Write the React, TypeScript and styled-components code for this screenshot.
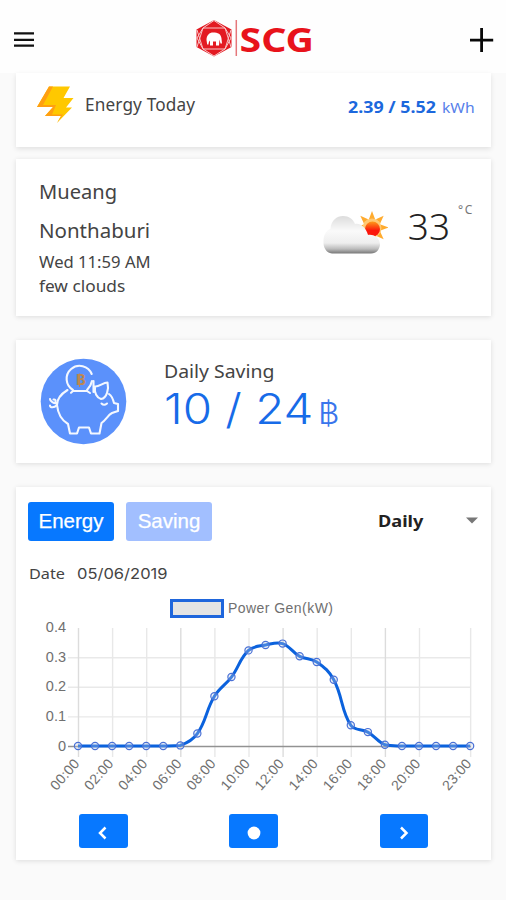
import React from "react";
import styled, { createGlobalStyle } from "styled-components";

const GlobalStyle = createGlobalStyle`
  * { box-sizing: border-box; }
  body { margin: 0; background: #fafafa; font-family: "Noto Sans", sans-serif; color: #333; }
  button { font: inherit; border: 0; padding: 0; cursor: pointer; }
`;

const Page = styled.div`
  height: 900px;
  overflow: hidden;
  background: #fafafa;
`;

const Header = styled.header`
  display: grid;
  grid-template-columns: 48px 1fr 48px;
  height: 73px;
  background: #fefefe;
`;

const IconButton = styled.button`
  display: flex;
  background: none;
`;

const Brand = styled.div`
  display: flex;
  justify-content: center;
  padding-left: 3px;
`;

const Stack = styled.main`
  display: flex;
  flex-direction: column;
  padding: 0 15px 0 16px;
`;

const Card = styled.section<{ $height: number; $gap?: number }>`
  height: ${(p) => p.$height}px;
  margin-top: ${(p) => p.$gap ?? 0}px;
  background: #fff;
  box-shadow: 0 1px 5px rgba(0, 0, 0, 0.12);
`;

const EnergyCard = styled(Card)`
  display: flex;
  align-items: center;
  gap: 11px;
  padding: 0 17px 11px 20px;
  box-shadow: 0 2px 5px rgba(0, 0, 0, 0.1);
`;

const WeatherCard = styled(Card)`
  display: flex;
  padding: 13px 17px 0 23px;
`;

const SavingCard = styled(Card)`
  display: flex;
  padding: 18px 0 0 24px;
`;

const Label = styled.span<{
  $size: number;
  $line?: number;
  $spacing?: number;
  $color?: string;
  $weight?: number;
  $font?: string;
  $stretch?: number;
}>`
  display: block;
  white-space: nowrap;
  font-family: ${(p) => p.$font ?? '"Noto Sans"'}, sans-serif;
  font-size: ${(p) => p.$size}px;
  line-height: ${(p) => (p.$line ? `${p.$line}px` : "normal")};
  letter-spacing: ${(p) => p.$spacing ?? 0}px;
  color: ${(p) => p.$color ?? "#444"};
  font-weight: ${(p) => p.$weight ?? 400};
  transform: scaleX(${(p) => p.$stretch ?? 1});
  transform-origin: left;
`;

const EnergyValue = styled.div`
  display: flex;
  align-items: baseline;
  gap: 13px;
  margin-left: auto;
  padding-top: 3px;
`;

const Place = styled.div`
  flex: 1;
`;

const Temperature = styled.div`
  display: flex;
  align-items: flex-start;
  gap: 8px;
  margin-left: 20px;
`;

const Reading = styled(Label)`
  margin-top: 28px;
`;

const Unit = styled(Label)`
  margin-top: 30px;
`;

const WeatherIcon = styled.svg`
  margin-top: 34px;
`;

const SavingText = styled.div`
  margin-left: 37px;
`;

const Amount = styled.div`
  display: flex;
  align-items: baseline;
  gap: 22px;
`;

const Toolbar = styled.div`
  display: flex;
  align-items: center;
  gap: 12px;
  padding: 15px 13px 0 12px;
`;

const ModeButton = styled.button<{ $active?: boolean }>`
  width: 86px;
  height: 39px;
  padding-bottom: 2px;
  border-radius: 3px;
  background: ${(p) => (p.$active ? "#0778ff" : "#a2bfff")};
  color: #fff;
  font-family: "Liberation Sans", sans-serif;
  font-size: 20.5px;
  -webkit-text-stroke: 0.25px #fff;
`;

const Select = styled.div`
  display: flex;
  align-items: center;
  justify-content: space-between;
  width: 100px;
  margin-left: auto;
  padding-bottom: 2px;
`;

const DateRow = styled.div`
  display: flex;
  gap: 16px;
  height: 55px;
  padding: 21px 0 0 13px;
`;

const Chart = styled.svg`
  display: block;
`;

const Pager = styled.div`
  display: flex;
  justify-content: space-between;
  padding: 0 63px;
  margin-top: 19px;
`;

const PageButton = styled.button`
  display: flex;
  align-items: center;
  justify-content: center;
  width: 48.5px;
  height: 34px;
  padding-top: 3px;
  border-radius: 3px;
  background: #0778ff;
`;

const values = [0, 0, 0, 0, 0, 0, 0.002, 0.042, 0.168, 0.233, 0.323, 0.341, 0.346, 0.303, 0.284, 0.224, 0.07, 0.047, 0.004, 0, 0, 0, 0, 0];
const ticks = [0, 2, 4, 6, 8, 10, 12, 14, 16, 18, 20, 23];
const LEFT = 62;
const STEP = 17.05;
const BASE = 150.5;
const UNIT = 296;

const points = values.map((v, i) => ({ x: LEFT + i * STEP, y: BASE - 0.5 - v * UNIT }));

function smoothPath(pts: { x: number; y: number }[], tension = 0.4) {
  const clamp = (y: number) => Math.min(BASE - 0.5, y);
  const controls = pts.map((p, i) => {
    const prev = pts[Math.max(0, i - 1)];
    const next = pts[Math.min(pts.length - 1, i + 1)];
    const d1 = Math.hypot(p.x - prev.x, p.y - prev.y);
    const d2 = Math.hypot(next.x - p.x, next.y - p.y);
    const a = (tension * d1) / (d1 + d2);
    const b = (tension * d2) / (d1 + d2);
    const dx = next.x - prev.x;
    const dy = next.y - prev.y;
    return { inX: p.x - a * dx, inY: clamp(p.y - a * dy), outX: p.x + b * dx, outY: clamp(p.y + b * dy) };
  });
  return pts.reduce((d, p, i) => {
    if (i === 0) return `M${p.x} ${p.y}`;
    const c0 = controls[i - 1];
    const c1 = controls[i];
    return `${d}C${c0.outX} ${c0.outY} ${c1.inX} ${c1.inY} ${p.x} ${p.y}`;
  }, "");
}

function PowerChart() {
  return (
    <Chart width="475" height="199" viewBox="0 0 475 199" fontFamily="Liberation Sans, sans-serif" fill="#707070">
      <rect x="155.5" y="4.5" width="51" height="16" fill="#e4e4e4" stroke="#1f66dc" strokeWidth="3" />
      <text x="212" y="16.5" fontSize="14" textLength="105">Power Gen(kW)</text>
      {[0.4, 0.3, 0.2, 0.1, 0].map((v) => (
        <text key={v} x="50" y={BASE + 4 - v * UNIT} textAnchor="end" fontSize="14.5">{v}</text>
      ))}
      {[0.1, 0.2, 0.3].map((v) => (
        <path key={v} d={`M52 ${BASE - v * UNIT}H455`} stroke="#e9e9e9" strokeWidth="1.4" />
      ))}
      {ticks.map((t) => (
        <path key={t} d={`M${LEFT + 0.5 + t * STEP} 32V161`} stroke={t % 6 ? "#e8e8e8" : "#dcdcdc"} strokeWidth="1.4" />
      ))}
      <path d={`M52 ${BASE}H455`} stroke="#929292" strokeWidth="1.3" />
      {ticks.map((t) => (
        <text key={t} transform={`translate(${LEFT + 2 + t * STEP} 168) rotate(-49)`} textAnchor="end" fontSize="14" textLength="36">
          {`${String(t).padStart(2, "0")}:00`}
        </text>
      ))}
      <path d={smoothPath(points)} fill="none" stroke="#0b62dd" strokeWidth="3" />
      {points.map((p, i) => (
        <circle key={i} cx={p.x} cy={p.y} r="3.6" fill="rgba(200,210,230,.3)" stroke="#4a71d6" strokeWidth="1.2" />
      ))}
    </Chart>
  );
}

function ScgLogo() {
  return (
    <svg width="122" height="73" viewBox="193 0 122 73">
      <path d="M213 20L230.500 29.500V47L213 56.500L195.500 47V29.500Z" fill="#e31a22" />
      <g fill="none" stroke="#fff" strokeWidth="1" opacity=".75">
        <path d="M213 20.500L202 28L196 38L202 49L213 56L224 49L230 38L224 28Z" />
        <path d="M196 30L202 49H224L230 30M196 47L202 28H224L230 47" />
      </g>
      <circle cx="213" cy="38.500" r="9" fill="#e31a22" />
      <path d="M205.500 40c0-5 3-7.500 6.500-7.500c5 0 8 1.500 8.500 6l.5 5h-1.500l-1-4-.5 6h-3v-4h-3v4h-3v-5c-1 1-1.500 2-1.500 4h-1.300z" fill="#fff" />
      <path d="M235.300 20V56" stroke="#e5777b" strokeWidth="1.500" />
      <text x="238.500" y="51.500" fontFamily="Noto Sans, sans-serif" fontWeight="700" fontSize="34.500" textLength="74.500" lengthAdjust="spacingAndGlyphs" fill="#e8131b">SCG</text>
    </svg>
  );
}

function Bolt() {
  return (
    <svg width="38" height="40" viewBox="35 85 38 40">
      <path d="M48 86.500H69L62.500 98H72.500L65 107.500H71L56 123L60 116H44L52 107H36Z" fill="#ffc800" />
      <path d="M48 86.500H52L42 105H55L51 114.500H62L56 123L60 116H44L52 107H36Z" fill="#ff9f12" />
    </svg>
  );
}

function PartlyCloudy() {
  const rays = [0, 45, 90, 135, 180, 225, 270, 315];
  return (
    <WeatherIcon width="66" height="48" viewBox="321 206 66 48">
      <defs>
        <linearGradient id="cloud" x1="0" y1="0" x2="0" y2="1">
          <stop offset="0" stopColor="#dcdcdc" />
          <stop offset=".4" stopColor="#fafafa" />
          <stop offset=".72" stopColor="#eee" />
          <stop offset=".88" stopColor="#bbb" />
          <stop offset="1" stopColor="#777" />
        </linearGradient>
        <linearGradient id="sun" x1="0" y1="0" x2="0" y2="1">
          <stop offset="0" stopColor="#ff9a19" />
          <stop offset=".6" stopColor="#fb160b" />
        </linearGradient>
      </defs>
      {rays.map((r) => (
        <path key={r} d="M368 219L371 211L374 219Z" transform={`rotate(${r} 371 227.500)`} fill="#ffab2e" />
      ))}
      <circle cx="371" cy="228" r="9.500" fill="#ffc873" />
      <circle cx="371.500" cy="229" r="7.500" fill="url(#sun)" />
      <path d="M331 253.500C325 253 322 247 322.500 241C322.500 234 326 230 329.500 229C330 220 336 216 342 216C348 216 352 219 354 224C360 223 365 228 367 235C374 234 379 239 379 245C378 250 376 253 370 253.500Z" fill="url(#cloud)" />
    </WeatherIcon>
  );
}

function PiggyBank() {
  return (
    <svg width="87" height="87" viewBox="40 358 87 87">
      <circle cx="83.500" cy="401.500" r="42.800" fill="#5b91fb" />
      <g fill="none" stroke="#f4f8ff" strokeWidth="2.100" strokeLinejoin="round" strokeLinecap="round">
        <path d="M73 390A13 13 0 1 1 91.700 374M92 381Q91 386 87 390M71 392.700L73 391H87L90 393" />
        <path d="M67.500 390C61 394 57 399 57 405C58 415 63 421 68 424L70 433.500H77L79 427.500H89L91 433.500H99.500L101.500 423C106 420 108 415 112 413L118 411V404L114 403C113 399 112 396 109 394" />
        <path d="M93.500 381V392M95 386.500C99 387 103 382.500 107.500 382.500C109 389 107 398 101 399C97 398 94 393 95 386.500Z" />
        <path d="M57 403C54 404 50 401 50 399M57 405C54 408 50 408 50 405.500M53.500 399.500Q56 399 55.500 402" />
        <path d="M101.500 403.500Q104 406 107 403.500" />
      </g>
      <text x="76" y="385" fontFamily="Liberation Mono, monospace" fontWeight="700" fontSize="16" fill="#bd8751">B</text>
      <path d="M79.500 373.500V387" stroke="#bd8751" />
    </svg>
  );
}

export default function App() {
  return (
    <>
      <GlobalStyle />
      <Page>
        <Header>
          <IconButton aria-label="Menu">
            <svg width="48" height="73"><path d="M14 33.300H34M14 39.800H34M14 45.700H34" stroke="#111" strokeWidth="2.300" /></svg>
          </IconButton>
          <Brand><ScgLogo /></Brand>
          <IconButton aria-label="Add">
            <svg width="48" height="73"><path d="M12 40.200H35.200M23.600 28V52" stroke="#080808" strokeWidth="2.800" /></svg>
          </IconButton>
        </Header>
        <Stack>
          <EnergyCard $height={74}>
            <Bolt />
            <Label $size={17.2} $spacing={0.15}>Energy Today</Label>
            <EnergyValue>
              <Label $size={16.5} $weight={700} $color="#1c68dd" $stretch={1.08}>2.39 / 5.52</Label>
              <Label $size={13.5} $color="#5680ea" $stretch={1.16}>kWh&nbsp;</Label>
            </EnergyValue>
          </EnergyCard>
          <WeatherCard $height={157} $gap={12}>
            <Place>
              <Label $size={19.5} $line={39} $stretch={1.03}>Mueang</Label>
              <Label $size={19.5} $line={39} $stretch={1.05}>Nonthaburi</Label>
              <Label $size={16} $line={24} $stretch={1.04}>Wed 11:59 AM</Label>
              <Label $size={16} $line={24} $stretch={1.08}>few clouds</Label>
            </Place>
            <PartlyCloudy />
            <Temperature>
              <Reading $size={37} $line={52} $weight={300} $color="#222">33</Reading>
              <Unit $size={12} $line={16} $color="#777" $spacing={1.6}>°C</Unit>
            </Temperature>
          </WeatherCard>
          <SavingCard $height={123} $gap={24}>
            <PiggyBank />
            <SavingText>
              <Label $size={18.5} $line={26} $stretch={1.05}>Daily Saving</Label>
              <Amount>
                <Label $size={42} $line={50} $weight={300} $font="Inter" $color="#176be8" $stretch={1.13}>10 / 24</Label>
                <Label $size={30} $line={50} $weight={300} $font="Inter" $color="#3975ec" $stretch={1.1}>฿</Label>
              </Amount>
            </SavingText>
          </SavingCard>
          <Card $height={373} $gap={24}>
            <Toolbar>
              <ModeButton $active>Energy</ModeButton>
              <ModeButton>Saving</ModeButton>
              <Select>
                <Label $size={16.5} $line={22} $weight={700} $color="#222" $stretch={1.1}>Daily</Label>
                <svg width="12" height="7"><path d="M0 .5H12L6 6.500Z" fill="#777" /></svg>
              </Select>
            </Toolbar>
            <DateRow>
              <Label $size={14.5} $line={22} $stretch={1.12}>Date</Label>
              <Label $size={14.5} $line={24} $font="Inter" $stretch={1.14}>05/06/2019</Label>
            </DateRow>
            <PowerChart />
            <Pager>
              <PageButton aria-label="Previous">
                <svg width="12" height="14"><path d="M8.500 1.500L3 7L8.500 12.500" fill="none" stroke="#fff" strokeWidth="2.500" /></svg>
              </PageButton>
              <PageButton aria-label="Current">
                <svg width="14" height="14"><circle cx="7" cy="7" r="6.400" fill="#fff" /></svg>
              </PageButton>
              <PageButton aria-label="Next">
                <svg width="12" height="14"><path d="M3 1.500L8.500 7L3 12.500" fill="none" stroke="#fff" strokeWidth="2.500" /></svg>
              </PageButton>
            </Pager>
          </Card>
        </Stack>
      </Page>
    </>
  );
}
